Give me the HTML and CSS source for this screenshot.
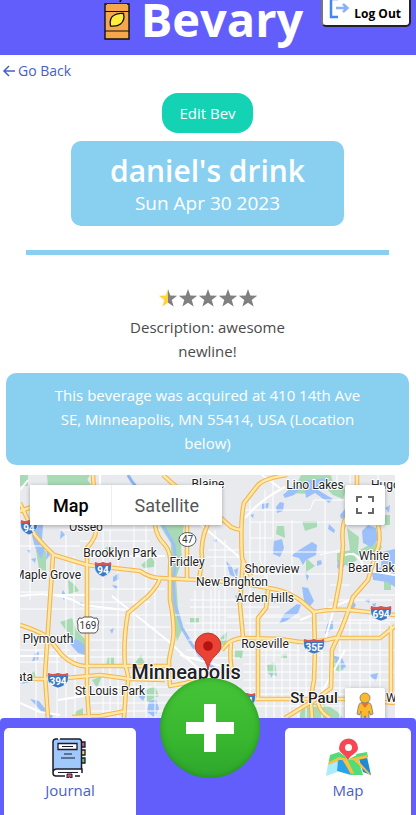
FILE: index.html
```html
<!DOCTYPE html>
<html lang="en">
<head>
<meta charset="utf-8">
<meta name="viewport" content="width=device-width, initial-scale=1">
<title>Bevary</title>
<link rel="stylesheet" href="styles.css">
</head>
<body>
<header class="topbar">
  <div class="brand">
    <svg class="brand-icon" viewBox="0 0 28 44" aria-hidden="true">
      <path d="M17 6l2-5" stroke="#111" stroke-width="1.800"/>
      <path d="M2 8h24v35H2z" fill="#f5a74b" stroke="#111" stroke-width="1.400"/>
      <path d="M2 15.500h24M2 35h24" stroke="#111" stroke-width="1.200"/>
      <path d="M4 8.500h20" stroke="#f5a74b" stroke-width="1"/>
      <path d="M7.500 30c-1-5 0-9 4-11 3-2 5-2 9-1.500 1 4 0 8-3 10.500-3 2.500-6 2.500-10 2z" fill="#fdee3c" stroke="#111" stroke-width="1.300"/>
    </svg>
    <h1 class="brand-name">Bevary</h1>
  </div>
  <button class="logout" type="button">
    <svg class="logout-icon" viewBox="0 0 20 22" aria-hidden="true">
      <path d="M9 2H2v18h7" fill="none" stroke="#4285f4" stroke-width="2.500"/>
      <path d="M7 11h11M14 7l4.500 4-4.500 4" fill="none" stroke="#8ab1f8" stroke-width="2.500"/>
    </svg>
    <span>Log Out</span>
  </button>
</header>

<main class="page">
  <a class="back" href="#">
    <svg class="back-icon" viewBox="0 0 14 14" aria-hidden="true"><path d="M13 7H2M7 2L2 7l5 5" fill="none" stroke="currentColor" stroke-width="1.500"/></svg>
    <span>Go Back</span>
  </a>
  <button class="edit" type="button">Edit Bev</button>
  <section class="hero">
    <h2 class="hero-title">daniel's drink</h2>
    <p class="hero-date">Sun Apr 30 2023</p>
  </section>
  <hr class="rule">
  <div class="stars" role="img" aria-label="Rated 0.5 out of 5">
    <svg viewBox="0 0 100 20" aria-hidden="true">
      <defs>
        <linearGradient id="half"><stop offset="50%" stop-color="#ffd43b"/><stop offset="50%" stop-color="#808080"/></linearGradient>
        <path id="star" d="M10 1l2.300 6.500 6.900.200-5.500 4.200 2 6.700-5.700-3.900-5.700 3.900 2-6.700-5.500-4.200 6.900-.200z"/>
      </defs>
      <use href="#star" fill="url(#half)"/>
      <g fill="#808080"><use href="#star" x="20"/><use href="#star" x="40"/><use href="#star" x="60"/><use href="#star" x="80"/></g>
    </svg>
  </div>
  <p class="description">Description: awesome newline!</p>
  <p class="place">This beverage was acquired at 410 14th Ave SE, Minneapolis, MN 55414, USA (Location below)</p>

  <section class="map" aria-label="Map of Minneapolis">
    <svg class="map-canvas" viewBox="20 475 375 243" preserveAspectRatio="xMidYMin slice">
      <defs>
        <g id="interstate">
          <path d="M-8-7Q-4-5 0-7Q4-5 8-7Q9-3 8 1Q6 6 0 8Q-6 6-8 1Q-9-3-8-7z" fill="#3b78c4" stroke="#fff" stroke-width=".6"/>
          <path d="M-8-7Q-4-5 0-7Q4-5 8-7l.4 3h-16.800z" fill="#d9534f"/>
        </g>
        <g id="wide">
          <path d="M-10-7Q-5-5 0-7Q5-5 10-7Q11-3 10 1Q8 6 0 8Q-8 6-10 1Q-11-3-10-7z" fill="#3b78c4" stroke="#fff" stroke-width=".6"/>
          <path d="M-10-7Q-5-5 0-7Q5-5 10-7l.4 3h-20.800z" fill="#d9534f"/>
        </g>
        <g id="motorways">
          <path d="M20 503L35 535Q45 547 54 555L87 565L140 571Q150 578 160 578L200 580L240 583L268 588Q285 590 300 600L314 612Q330 609 350 610L395 615"/>
          <path d="M20 511L32 507L50 508"/>
          <path d="M53 555L50 600L45 675L48 718"/>
          <path d="M93 475L96 530Q96 538 87 548V690L89 718"/>
          <path d="M155 525Q157 538 165 545Q172 553 170 570V600Q176 630 172 645L169 660Q169 672 170 686L186 683L205 678"/>
          <path d="M163 475L180 490L187 510V580"/>
          <path d="M208 524Q200 540 202 560L199 580"/>
          <path d="M160 578Q158 586 148 596L128 613Q123 640 125 665Q131 680 126 690L124 718"/>
          <path d="M20 679H55L100 675L130 679L165 680"/>
          <path d="M20 625Q47 634 50 640L62 655Q75 667 87 666H168"/>
          <path d="M72 717L100 716L126 711"/>
          <path d="M287 475Q265 478 258 485L244 503Q240 520 242 558Q246 568 251 576"/>
          <path d="M220 517L231 527Q237 530 242 530"/>
          <path d="M222 650L228 643Q235 638 245 638L280 639L300 642Q320 642 335 638H380L395 626"/>
          <path d="M314 612L315 650L314 680Q311 696 311 702L285 718"/>
          <path d="M357 475V500L346 518Q341 526 343 545L340 580L334 611"/>
          <path d="M378 525Q382 540 376 553L368 580L353 597Q346 618 341 630L332 650L331 688L311 703"/>
          <path d="M243 560L240 605L243 637"/>
          <path d="M268 590L266 608L258 618V698"/>
          <path d="M231 643Q229 660 233 675"/>
          <path d="M248 699H350L395 703"/>
          <path d="M318 703Q320 712 330 718M311 702L312 718"/>
          <path d="M391 626V702"/>
        </g>
      </defs>
      <rect x="20" y="475" width="375" height="400" fill="#e8eaed"/>

      <g fill="#a8dab5">
        <path d="M47 475H90L86 482H75L76 487H48z"/><path d="M20 475h8v11h-8z"/>
        <path d="M62 478l25 1 4 6H58z"/><path d="M36 550l10 1v20l-7-2z"/><path d="M104 549l6-4 5 5-4 6-7-2z"/>
        <path d="M160 525h24l-3 22-10-4-6-9zM141 565l10-8 4 5-1 5-10 1z"/>
        <path d="M171 540l10 6 1 14-6 18 2 30 5 20-6 13-4-20-3-30z"/>
        <path d="M68 580l7 5 4 6-10 3zM60 622l12-4 4 12 10 10-3 8-13-12z"/>
        <path d="M108 657h6v7l-8 2zM141 655l-6 8 10 1zM190 618h9v5h-9z"/>
        <path d="M287 493l9-7 5-11h30l2 8 14 3-4 13-10-4-9-9-12 8z"/>
        <path d="M277 526h7l1 12-9-4zM302 521h15v6l-12 4zM306 558l9 8-9 6z"/>
        <path d="M347 528l12 9-1 14 16-9 8 4-3 8-20 3-9-7zM337 553l14-3 6 10-9 6-11-4zM384 580h7v10h-7z"/>
        <path d="M385 515h5v10h-7zM267 665l8-3 2 14-9-2zM332 657l12 12-5 3-9-6z"/>
        <path d="M235 650h8l-1 8-7 0zM221 637l6-5-1 12-8 2zM281 654h6v4h-6z"/>
        <path d="M300 718q-1-12 12-14 17-3 31 14zM370 690l12 3v12h-12z"/>
        <path d="M145 690l10-4 4 10-12 6zM75 712l8-4v10h-8zM202 686h15v8h-12z"/>
        <path d="M92 680l10-4-5 12zM30 675l4-4 3 8zM245 710l5-2 1 8z"/>
      </g>
      <g fill="#9cc0f9">
        <path d="M128 475Q135 488 145 494" fill="none" stroke="#8ab4f0" stroke-width="3"/>
        <path d="M163 525L174 545L176 562L173 580L175 605L182 628L192 645L203 660L214 668" fill="none" stroke="#9cc0f9" stroke-width="3"/>
        <path d="M36 525l7 0-1 15 4 6-5 13-6-12-3-11zM47 548l3 7-4 5zM63 590l3 5-2 5-3-4zM61 530l4 5-5 4z"/>
        <path d="M67 635l5 2 14 8-1 10-7-2-7-8zM35 653l4-1-1 8-6 1zM31 559l5-1-1 5zM27 550l4 0-1 4z"/>
        <path d="M149 701l7-2 3 10-5 8-7-5zM141 691l5 4-3 6-4-4zM30 699l9 2 8 10 6 5-2 3-8-6zM21 684l7-6 2 4z"/>
        <path d="M274 541l8-2 2 9-4 9-7-3zM296 552l16-10 5 3-1 10-10 5-3 5-4-7-8-2zM317 561l4-1 1 4-5 2z"/>
        <path d="M276 507l4-5 4 1-1 8-6 2zM262 504l7-1-1 5-6 1zM329 524l6 6-1 3-6-4zM283 495l13-12 6 4-8 8-9 3z"/>
        <path d="M304 481l22-3 3 7-11 5 15 9-4 4-14-10-9 5z"/>
        <path d="M362 531l6-6 8 3 2 12-7 7-8-4zM340 515l5-6 1 8-5 2zM385 508l5-3-1 8z"/>
        <path d="M382 552l13-3v38l-8-5-14-2-1-7 9-6z"/>
        <path d="M302 587l6 1 6 13-6 8-4-8zM305 572l4 4-2 5zM226 561l6 6 3 10-5-2zM234 570l4-2-1 9z"/>
        <path d="M284 614l13-10 4 1-3 8-12 8-7 3zM272 600l3-5 3 5-4 3zM326 629l2-7 5-1 0 8-8 5zM347 607l6-6 3 4-5 8z"/>
        <path d="M332 655l10 3 4 9-5 2zM369 675l9-2-2 8zM350 700l3 6-4 4zM372 604l4-1-1 6zM270 673l3 1-2 4z"/>
        <path d="M213 540l4-1-1 4zM235 595l6 2-3 8zM80 602l3 2-2 3zM113 577l6-4 0 6-6 3zM110 630l4-2-2 6zM112 585l6 1-2 4z"/>
        <path d="M338 560l7 4-4 8-4-5zM364 600l6-1-1 4zM250 515l4-1-1 4zM52 562l2 1-1 3z"/>
      </g>

      <g fill="none" stroke="#fff">
        <path stroke-width="1" d="M20 546H80M20 573H60M20 592H48M20 609H130M30 525V600M66 535V718M74 556V640M103 530V718M118 560V718M110 530V560M134 525V718M146 525V718M155 560V718M20 650H70M20 662H60M36 640V718M57 640V718M60 530H160M80 541H150M95 553H125M90 589H165M90 602H150M90 615H180M90 627H170M90 640H170M90 650H170M90 657H170M90 687H240M90 695H240M90 703H240M90 711H240M75 655V718M110 657V718"/>
        <path stroke-width="1" d="M215 530V640M225 540V640M208 550H242M206 557H242M210 566H240M190 600H300M190 607H280M180 615H300M185 623H390M185 630H385M195 590V660M203 590V660M211 590V660M219 590V650M188 640H225M186 650H300M183 658H240M250 500V640M260 522V560L267 575V595M250 522H340M245 510H310L314 500H345M250 538H273V480M292 520V600M325 500V620M243 552H340M245 574H340M265 490V590"/>
        <path stroke-width="1" d="M250 645V718M266 645V718M274 640V718M282 640V718M290 643V718M298 645V718M306 645V718M322 645V718M340 640V718M350 615V718M360 620V718M370 610V700M380 620V690M243 655H390M243 664H390M243 672H370M243 680H390M243 688H350M243 694H350M243 706H350M338 650H395M340 672H395M355 570H395M355 595H395M340 620H395M328 600H392M330 585H350M350 475V520M337 475V490M378 475V485M227 617H300M320 555L340 550"/>
        <path stroke-width="2" d="M112 596L167 640L213 682M195 520L243 560M245 518Q260 500 285 487M20 596Q60 590 82 605L125 610M20 656H85M100 475V485M90 556H165M20 490L28 480M333 612L325 640M345 555Q360 550 364 570L395 575M262 475L280 488M300 620L350 600M52 595H85M58 700L90 695M180 655L225 667M323 690L345 650M20 703L40 712L60 715"/>
      </g>

      <use href="#motorways" fill="none" stroke="#f6b44c" stroke-width="4.600" stroke-linejoin="round"/>
      <use href="#motorways" fill="none" stroke="#ffe9a8" stroke-width="2.400" stroke-linejoin="round"/>

      <g class="shields">
        <use href="#interstate" x="29" y="527"/><text x="29" y="532">94</text>
        <use href="#interstate" x="103" y="569"/><text x="103" y="574">94</text>
        <use href="#wide" x="58" y="680"/><text x="58" y="685">394</text>
        <use href="#wide" x="381" y="613"/><text x="381" y="618">694</text>
        <use href="#wide" x="314" y="646"/><text x="314" y="651">35E</text>
        <use href="#interstate" x="247" y="700"/><text x="247" y="705">94</text>
      </g>
      <g class="routes">
        <ellipse cx="187.500" cy="539.500" rx="8.500" ry="7"/><text x="187.500" y="543">47</text>
        <path d="M79 618q4 1 5-1h8q1 2 5 1 3 4 1 7 1 6-3 8h-14q-4-2-3-8-2-3 1-7z"/><text x="88" y="629">169</text>
        <path class="hidden-shield" d="M116 525v-3h12v3z"/>
      </g>

      <g class="labels">
        <text x="208" y="488">Blaine</text><text x="315" y="489">Lino Lakes</text><text x="371" y="489" class="start">Hugo</text>
        <text x="86" y="531">Osseo</text><text x="120" y="557">Brooklyn Park</text><text x="187" y="566">Fridley</text>
        <text x="81" y="579" class="end">Maple Grove</text><text x="272" y="573">Shoreview</text><text x="232" y="586">New Brighton</text>
        <text x="374" y="560">White</text><text x="348" y="572" class="start">Bear Lake</text>
        <text x="265" y="602">Arden Hills</text><text x="48" y="643">Plymouth</text><text x="265" y="648">Roseville</text>
        <text x="33" y="681" class="end">Wayzata</text><text x="110" y="695">St Louis Park</text><text x="386" y="702" class="start">Woodbury</text>
        <text x="314" y="703" class="town">St Paul</text><text x="186" y="679" class="city">Minneapolis</text>
      </g>
      <path d="M208 670C206 655 195 655 195 646A13 13 0 0 1 221 646C221 655 210 655 208 670z" fill="#ea4335" stroke="#b8261f" stroke-width=".8"/>
      <circle cx="208" cy="646" r="4.800" fill="#b31412"/>
    </svg>
    <div class="map-types">
      <button class="map-type selected" type="button">Map</button>
      <button class="map-type" type="button">Satellite</button>
    </div>
    <button class="map-tool fullscreen" type="button" aria-label="Toggle fullscreen view">
      <svg viewBox="0 0 18 18" aria-hidden="true"><path d="M1 6V1h5M12 1h5v5M17 12v5h-5M6 17H1v-5" fill="none" stroke="#666" stroke-width="2"/></svg>
    </button>
    <button class="map-tool pegman" type="button" aria-label="Show street view">
      <svg viewBox="0 0 18 32" aria-hidden="true">
        <path d="M5.500 10.500Q3 11 2.500 14L1 22l2.500 1L5 19v13h3.500v-8h1v8H13V19l1.500 4 2.500-1-1.500-8q-.5-3-3-3.500z" fill="#fdb92c" stroke="#777" stroke-width=".8"/>
        <circle cx="9" cy="6" r="5" fill="#fdb92c" stroke="#777" stroke-width=".8"/>
        <path d="M5 11h8l-4 5z" fill="#e37435"/>
      </svg>
    </button>
  </section>
</main>

<nav class="tabs" aria-label="Main">
  <a class="tab" href="#">
    <svg class="tab-icon" viewBox="0 0 40 40" aria-hidden="true">
      <g stroke="#1b1b2b" stroke-width="1.300">
        <path d="M31 4h4v5h-4z" fill="#e5566d"/><path d="M31 12h4v5h-4z" fill="#f6d857"/><path d="M31 20h4v5h-4z" fill="#5ac77c"/>
      </g>
      <path d="M5 1h24q2 0 2 3v27H3V4q0-3 2-3z" fill="#a0c8fa"/>
      <path d="M6 31h26v7H6q-3 0-3-3.500T6 31z" fill="#fff"/>
      <path d="M8 1H6Q3 1 3 4v31q0 3 3 3h9M10 1h19q2.500 0 2.500 3v27M3 35q0-4 4-4h25v4M30 38h-5" fill="none" stroke="#1b1b2b" stroke-width="1.500"/>
      <path d="M8 5.500h19v6H8z" fill="#fff" stroke="#1b1b2b" stroke-width="1.300"/>
      <path d="M12 8.500h11M14 16h8M11 20h14M8 34.500h20" stroke="#1b1b2b" stroke-width="1.200"/>
      <path d="M17 36h5v4l-2.500-1L17 40z" fill="#e5566d" stroke="#1b1b2b"/>
    </svg>
    <span>Journal</span>
  </a>
  <div class="add-slot">
    <button class="add" type="button" aria-label="Add beverage">
      <svg viewBox="0 0 48 48" aria-hidden="true"><path d="M18 0h12v18h18v12H30v18H18V30H0V18h18z" fill="#fff"/></svg>
    </button>
  </div>
  <a class="tab" href="#">
    <svg class="tab-icon wide" viewBox="0 0 46 40" aria-hidden="true">
      <path d="M5 17l9-3v9L3 28z" fill="#50dc78"/>
      <path d="M3 26l10-5-1 13-11 4z" fill="#a9edfc"/>
      <path d="M13 21l6-2 7 18-14-4z" fill="#28a2e8"/>
      <path d="M14 14l10 7 8-4 6 20-12 0-8-16-5 1z" fill="#50dc78"/>
      <path d="M33 18l9 1 4 18-8-3z" fill="#2289d6"/>
      <path d="M31 16l11-2 1 5-10 2z" fill="#50dc78"/>
      <path d="M4 24l10-5 10 2 18-4 .5 3-10 2 12 13 1 3-17-16-6 0 7 14-4-1-8-13-3 0-11 5z" fill="#fdbf3f"/>
      <path d="M23 22C20 16 14 15 14 10a9.500 9.500 0 0 1 19 0C33 15 26 16 23 22z" fill="#fa4651"/>
      <circle cx="23.500" cy="9.500" r="3.500" fill="#fff"/>
    </svg>
    <span>Map</span>
  </a>
</nav>
</body>
</html>
```
FILE: styles.css
```css
* { box-sizing: border-box; }

body {
  margin: 0;
  min-height: 100vh;
  display: flex;
  flex-direction: column;
  background: #fff;
  color: #4a4a4a;
  font-family: "Segoe UI", "Open Sans", "Noto Sans", sans-serif;
  font-size: 15px;
  line-height: 24px;
}

h1, h2, p { margin: 0; }
button { font-family: inherit; cursor: pointer; }
a { color: #485fc7; text-decoration: none; }
svg { display: block; }

.topbar {
  height: 55px;
  display: flex;
  justify-content: flex-end;
  align-items: flex-end;
  gap: 18px;
  padding: 0 5px 0 0;
  background: #615efc;
  overflow: hidden;
}

.brand { display: flex; align-items: flex-end; gap: 10px; }
.brand-icon { width: 28px; height: 44px; margin-bottom: 15px; }
.brand-name {
  color: #fff;
  font-size: 47px;
  line-height: 72px;
  font-weight: 700;
}

.logout {
  display: flex;
  align-items: flex-end;
  gap: 5px;
  height: 40px;
  margin-bottom: 28px;
  padding: 0 8px 3px 6px;
  background: #fff;
  border: 2px solid #222;
  border-left-color: #777;
  border-radius: 5px;
  color: #000;
  font-size: 12px;
  line-height: 16px;
  font-weight: 700;
  white-space: nowrap;
}
.logout-icon { width: 20px; height: 22px; margin-bottom: 3px; }

.page {
  flex: 1;
  display: flex;
  flex-direction: column;
  align-items: center;
  padding: 4px 1px 0 0;
}

.back {
  align-self: flex-start;
  display: flex;
  align-items: center;
  gap: 2px;
  padding-left: 2px;
  font-size: 14px;
}
.back-icon { width: 14px; height: 14px; }

.edit {
  height: 40px;
  margin-top: 10px;
  padding: 0 17px;
  border: 0;
  border-radius: 16px;
  background: #14d2b4;
  color: #fff;
  font-size: 15px;
}

.hero {
  margin-top: 8px;
  padding: 12px 39px 8px;
  border-radius: 10px;
  background: #89cff0;
  color: #fff;
  text-align: center;
}
.hero-title { font-size: 30px; line-height: 36px; font-weight: 600; }
.hero-date { font-size: 19px; line-height: 29px; }

.rule {
  width: calc(100% - 52px);
  height: 5px;
  margin: 24px 0 0;
  border: 0;
  background: #89cff0;
}

.stars { width: 100px; margin-top: 33px; }

.description { max-width: 200px; margin-top: 7px; text-align: center; }

.place {
  align-self: stretch;
  margin: 10px 6px 0;
  padding: 10px 40px;
  border-radius: 10px;
  background: #89cff0;
  color: #fff;
  text-align: center;
}

.map {
  position: relative;
  flex: 1;
  align-self: stretch;
  min-height: 240px;
  margin: 10px 20px 0;
  overflow: hidden;
  font-family: Roboto, sans-serif;
}
.map-canvas { width: 100%; height: 100%; }

.labels text {
  font-size: 12px;
  fill: #202124;
  stroke: #fff;
  stroke-width: 2px;
  stroke-linejoin: round;
  paint-order: stroke;
  text-anchor: middle;
}
.labels .start { text-anchor: start; }
.labels .end { text-anchor: end; }
.labels .town { font-size: 15px; font-weight: 500; }
.labels .city { font-size: 20px; font-weight: 500; }

.shields text, .routes text { text-anchor: middle; font-size: 10px; }
.shields text { fill: #fff; font-weight: 700; }
.routes ellipse, .routes path { fill: #fff; stroke: #555; }
.routes .hidden-shield { fill: #777; stroke: none; }
.routes text { fill: #333; }

.map-types {
  position: absolute;
  top: 10px;
  left: 10px;
  display: flex;
  border-radius: 2px;
  box-shadow: 0 1px 4px rgba(0, 0, 0, 0.3);
}
.map-type {
  height: 40px;
  padding: 0 23px;
  border: 0;
  background: #fff;
  color: #565656;
  font-size: 18px;
}
.map-type.selected {
  color: #000;
  font-weight: 500;
  box-shadow: inset -1px 0 #eee;
}

.map-tool {
  position: absolute;
  right: 10px;
  width: 40px;
  height: 40px;
  padding: 0;
  display: grid;
  place-items: center;
  border: 0;
  border-radius: 2px;
  background: #fff;
  box-shadow: 0 1px 4px rgba(0, 0, 0, 0.3);
}
.fullscreen { top: 10px; }
.fullscreen svg { width: 18px; }
.pegman { top: 213px; }
.pegman svg { width: 18px; height: 32px; }

.tabs {
  display: grid;
  grid-template-columns: 132fr 149fr 126fr;
  height: 97px;
  padding: 10px 5px 0 4px;
  background: #615efc;
  border-radius: 4px 4px 0 0;
}

.tab {
  display: flex;
  flex-direction: column;
  align-items: center;
  padding-top: 10px;
  background: #fff;
  border-radius: 5px 5px 0 0;
  line-height: 25px;
}
.tab-icon { width: 40px; height: 40px; }
.tab-icon.wide { width: 46px; }

.add-slot { position: relative; }
.add {
  position: absolute;
  top: -50px;
  left: calc(50% - 51px);
  width: 100px;
  height: 100px;
  display: grid;
  place-items: center;
  border: 0;
  border-radius: 50%;
  background: linear-gradient(#46c438, #38b72f 60%, #2fa62c);
  box-shadow: inset 0 0 6px rgba(0, 90, 0, 0.4);
}
.add svg { width: 48px; height: 48px; }
```
